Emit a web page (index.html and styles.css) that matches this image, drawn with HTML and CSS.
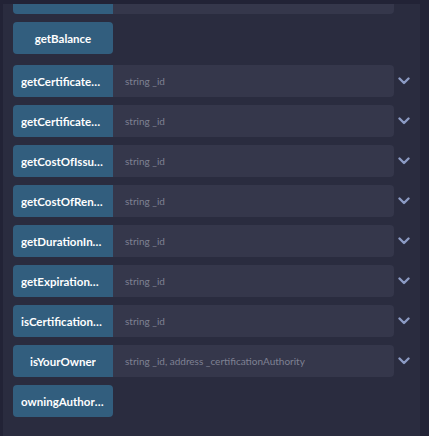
FILE: index.html
```html
<!DOCTYPE html>
<html>
<head>
<meta charset="utf-8">
<link rel="stylesheet" href="styles.css">
</head>
<body>
<div class="frame">
  <div class="panel">
    <div class="list">
      <div class="row"><div class="btn btn-joined"></div><div class="field"></div><div class="chev"></div></div>
      <div class="row row-solo"><div class="btn">getBalance</div></div>
      <div class="row"><div class="btn btn-joined"><span class="lbl">getCertificateAuthority</span></div><div class="field">string _id</div><div class="chev"><svg viewBox="0 0 12 8" width="12" height="8"><path d="M1.5 1.5 L6 6 L10.5 1.5" fill="none" stroke="#8c9bc4" stroke-width="2.4" stroke-linecap="round" stroke-linejoin="round"/></svg></div></div>
      <div class="row"><div class="btn btn-joined"><span class="lbl">getCertificateCount</span></div><div class="field">string _id</div><div class="chev"><svg viewBox="0 0 12 8" width="12" height="8"><path d="M1.5 1.5 L6 6 L10.5 1.5" fill="none" stroke="#8c9bc4" stroke-width="2.4" stroke-linecap="round" stroke-linejoin="round"/></svg></div></div>
      <div class="row"><div class="btn btn-joined"><span class="lbl">getCostOfIssuing</span></div><div class="field">string _id</div><div class="chev"><svg viewBox="0 0 12 8" width="12" height="8"><path d="M1.5 1.5 L6 6 L10.5 1.5" fill="none" stroke="#8c9bc4" stroke-width="2.4" stroke-linecap="round" stroke-linejoin="round"/></svg></div></div>
      <div class="row"><div class="btn btn-joined"><span class="lbl">getCostOfRenewal</span></div><div class="field">string _id</div><div class="chev"><svg viewBox="0 0 12 8" width="12" height="8"><path d="M1.5 1.5 L6 6 L10.5 1.5" fill="none" stroke="#8c9bc4" stroke-width="2.4" stroke-linecap="round" stroke-linejoin="round"/></svg></div></div>
      <div class="row"><div class="btn btn-joined"><span class="lbl">getDurationInDays</span></div><div class="field">string _id</div><div class="chev"><svg viewBox="0 0 12 8" width="12" height="8"><path d="M1.5 1.5 L6 6 L10.5 1.5" fill="none" stroke="#8c9bc4" stroke-width="2.4" stroke-linecap="round" stroke-linejoin="round"/></svg></div></div>
      <div class="row"><div class="btn btn-joined"><span class="lbl">getExpirationDate</span></div><div class="field">string _id</div><div class="chev"><svg viewBox="0 0 12 8" width="12" height="8"><path d="M1.5 1.5 L6 6 L10.5 1.5" fill="none" stroke="#8c9bc4" stroke-width="2.4" stroke-linecap="round" stroke-linejoin="round"/></svg></div></div>
      <div class="row"><div class="btn btn-joined"><span class="lbl">isCertificationAuthority</span></div><div class="field">string _id</div><div class="chev"><svg viewBox="0 0 12 8" width="12" height="8"><path d="M1.5 1.5 L6 6 L10.5 1.5" fill="none" stroke="#8c9bc4" stroke-width="2.4" stroke-linecap="round" stroke-linejoin="round"/></svg></div></div>
      <div class="row"><div class="btn btn-joined"><span class="lbl">isYourOwner</span></div><div class="field">string _id, address _certificationAuthority</div><div class="chev"><svg viewBox="0 0 12 8" width="12" height="8"><path d="M1.5 1.5 L6 6 L10.5 1.5" fill="none" stroke="#8c9bc4" stroke-width="2.4" stroke-linecap="round" stroke-linejoin="round"/></svg></div></div>
      <div class="row row-solo"><div class="btn"><span class="lbl">owningAuthority</span></div></div>
    </div>
  </div>
  <div class="track"></div>
</div>
</body>
</html>
```
FILE: styles.css
```css
html, body {
  margin: 0;
  padding: 0;
  background: #222336;
  font-family: "Lato", "Noto Sans", sans-serif;
}
.frame {
  display: flex;
  width: 429px;
  height: 436px;
  overflow: hidden;
}
.panel {
  margin: 4px 0 0 3px;
  width: 417px;
  height: 432px;
  background: #2a2c3f;
  overflow: hidden;
}
.track {
  flex: 1;
  background: #222336;
}
.list {
  display: flex;
  flex-direction: column;
  gap: 8px;
  padding-left: 10px;
  margin-top: -22px;
}
.row {
  display: flex;
  height: 32px;
  align-items: stretch;
}
.row-solo {
  margin-bottom: 3px;
}
.btn {
  width: 100px;
  box-sizing: border-box;
  padding: 0 8px;
  background: #325e7e;
  color: #ffffff;
  font-size: 11.5px;
  font-weight: 700;
  border-radius: 4px;
  display: flex;
  align-items: center;
  justify-content: center;
  white-space: nowrap;
  overflow: hidden;
}
.btn-joined {
  border-radius: 4px 0 0 4px;
}
.lbl {
  display: block;
  overflow: hidden;
  text-overflow: ellipsis;
  white-space: nowrap;
  max-width: 100%;
}
.field {
  width: 281px;
  box-sizing: border-box;
  padding-left: 12px;
  background: #35374b;
  color: #7f8193;
  font-size: 10px;
  border-radius: 0 4px 4px 0;
  display: flex;
  align-items: center;
  white-space: nowrap;
  overflow: hidden;
}
.chev {
  width: 20px;
  display: flex;
  align-items: center;
  justify-content: center;
}
.chev svg {
  display: block;
}
```
